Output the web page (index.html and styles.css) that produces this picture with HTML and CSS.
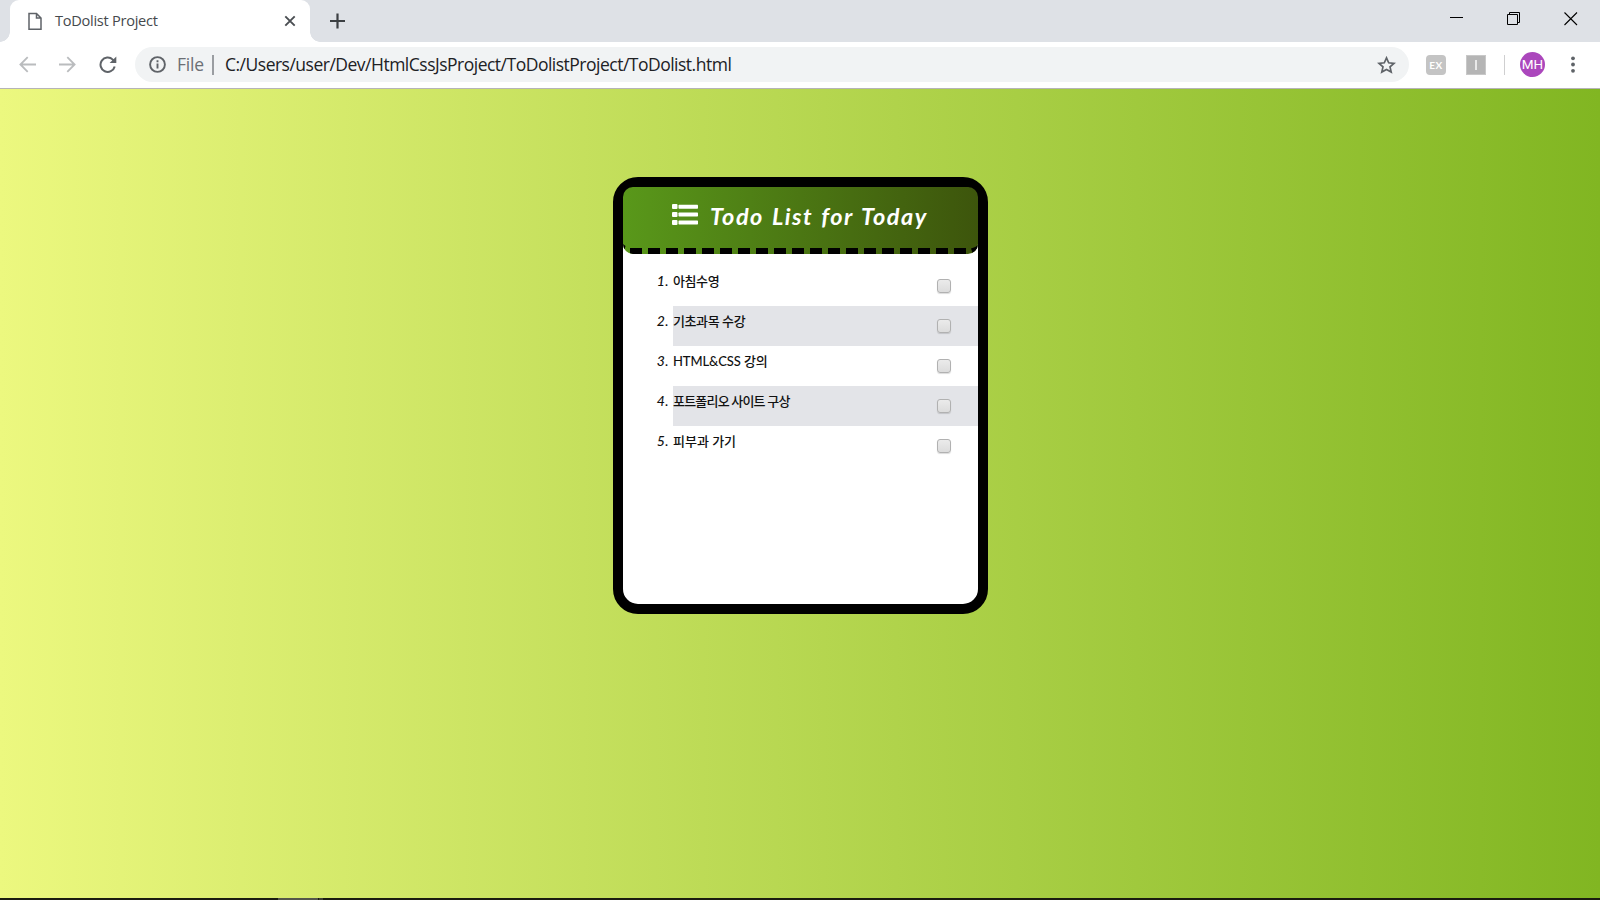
FILE: index.html
```html
<!DOCTYPE html>
<html lang="ko">
<head>
<meta charset="utf-8">
<title>ToDolist Project</title>
<link rel="stylesheet" href="styles.css">
</head>
<body>
<div class="window">
  <header class="tabbar">
    <div class="tab">
      <svg class="tab-icon" width="14" height="19" viewBox="0 0 14 19" fill="none" stroke="#5f6368" stroke-width="1.5"><path d="M1 1.5H8.5L13 6V17.3H1ZM8.5 1.5V6H13"/></svg>
      <span class="tab-title">ToDolist Project</span>
      <svg class="tab-close" width="12" height="12" viewBox="0 0 12 12" stroke="#4a4e52" stroke-width="1.9"><path d="M1.3 1.3 10.7 10.7M10.7 1.3 1.3 10.7"/></svg>
    </div>
    <svg class="new-tab" width="16" height="16" viewBox="0 0 16 16" stroke="#3c4043" stroke-width="2.2"><path d="M7.5 .5V15.5M0 8H15"/></svg>
    <div class="controls">
      <svg width="14" height="14" viewBox="0 0 14 14" stroke="#000" fill="none"><path d="M0 5.5H13"/></svg>
      <svg width="14" height="14" viewBox="0 0 14 14" stroke="#000" fill="none"><path d="M.5 2.5H10.5V12.5H.5ZM2.5 2.5V.5H12.5V10.5H10.5"/></svg>
      <svg width="14" height="14" viewBox="0 0 14 14" stroke="#000" fill="none" stroke-width="1.1"><path d="M.5 .5 13 13M13 .5 .5 13"/></svg>
    </div>
  </header>
  <nav class="toolbar">
    <div class="nav-icons">
      <svg width="17" height="17" viewBox="0 0 17 17" fill="none" stroke="#babcbe" stroke-width="1.8"><path d="M17 8.5H1.5M8.7 1.2 1.4 8.5 8.7 15.8"/></svg>
      <svg width="17" height="17" viewBox="0 0 17 17" fill="none" stroke="#babcbe" stroke-width="1.8"><path d="M0 8.5H15.5M8.3 1.2 15.6 8.5 8.3 15.8"/></svg>
      <svg width="18" height="17" viewBox="0 0 18 17" fill="none" stroke="#5f6368" stroke-width="2"><path d="M15.7 10.5A7.2 7.2 0 1 1 13.8 3.6L15 5"/><path d="M17.3 .6V7.1H10.6Z" fill="#5f6368" stroke="none"/></svg>
    </div>
    <div class="address">
      <svg width="17" height="17" viewBox="0 0 17 17" fill="none" stroke="#5f6368" stroke-width="1.9"><circle cx="8.5" cy="8.5" r="7.4"/><path d="M8.5 7.4V12.5M8.5 4.3V6.2"/></svg>
      <span class="scheme">File</span>
      <span class="divider"></span>
      <span class="url">C:/Users/user/Dev/HtmlCssJsProject/ToDolistProject/ToDolist.html</span>
      <svg class="star" width="19" height="18" viewBox="0 0 19 18" fill="none" stroke="#5f6368" stroke-width="1.7"><path d="M9.5 1.9 11.7 6.8 17 7.3 13 10.9 14.2 16.1 9.5 13.4 4.8 16.1 6 10.9 2 7.3 7.3 6.8Z"/></svg>
    </div>
    <span class="ext ext-round">EX</span>
    <span class="ext ext-square"><i class="bar"></i></span>
    <span class="separator"></span>
    <span class="avatar">MH</span>
    <svg class="menu" width="4" height="17" viewBox="0 0 4 17" fill="#5f6368"><circle cx="2" cy="2.3" r="1.9"/><circle cx="2" cy="8.5" r="1.9"/><circle cx="2" cy="14.8" r="1.9"/></svg>
  </nav>
  <main class="page">
    <section class="card">
      <div class="card-head">
        <svg class="list-icon" width="26" height="21" viewBox="0 0 26 21" fill="#fff"><rect width="5.5" height="5" rx="1"/><rect x="6.5" y=".7" width="19.5" height="4" rx=".7"/><rect y="8" width="5.5" height="5" rx="1"/><rect x="6.5" y="8.5" width="19.5" height="4" rx=".7"/><rect y="16" width="5.5" height="5" rx="1"/><rect x="6.5" y="16.4" width="19.5" height="4" rx=".7"/></svg>
        <h1 class="title">Todo List for Today</h1>
        <svg class="dashes" width="355" height="10" viewBox="0 0 355 10"><path d="M7 7H348" stroke="#000" stroke-width="6" stroke-dasharray="12 6"/><path d="M0 0 2.5 2 1.5 5.5 0 3ZM355 1Q352 4 348 4.5L349.5 9Q354 7 355 2Z"/></svg>
      </div>
      <ol class="list">
        <li class="item"><span class="num">1.</span><div class="row"><span class="label l1">아침수영</span><span class="check"></span></div></li>
        <li class="item"><span class="num">2.</span><div class="row shaded"><span class="label l2">기초과목 수강</span><span class="check"></span></div></li>
        <li class="item"><span class="num">3.</span><div class="row"><span class="label l3">HTML&amp;CSS 강의</span><span class="check"></span></div></li>
        <li class="item"><span class="num">4.</span><div class="row shaded"><span class="label l4">포트폴리오 사이트 구상</span><span class="check"></span></div></li>
        <li class="item"><span class="num">5.</span><div class="row"><span class="label l5">피부과 가기</span><span class="check"></span></div></li>
      </ol>
    </section>
  </main>
  <footer class="taskbar"><span class="task"></span><span class="task-edge"></span></footer>
</div>
</body>
</html>
```
FILE: styles.css
```css
* { box-sizing: border-box; }
body { margin: 0; overflow: hidden; font-family: "Open Sans", "Noto Sans CJK KR", sans-serif; }
svg { display: block; flex: none; }
.window { width: 1600px; height: 900px; display: flex; flex-direction: column; }

.tabbar { height: 42px; flex: none; display: flex; background: #dee1e6; padding-left: 10px; }
.tab {
  width: 300px; height: 42px; display: flex; align-items: center;
  padding: 0 14px 0 18px; background: #fff; border-radius: 9px 9px 0 0; position: relative;
}
.tab::before, .tab::after { content: ""; position: absolute; bottom: 0; width: 10px; height: 10px; }
.tab::before { left: -10px; background: radial-gradient(circle at 0 0, transparent 9.5px, #fff 10px); }
.tab::after { right: -10px; background: radial-gradient(circle at 100% 0, transparent 9.5px, #fff 10px); }
.tab-title { margin: 0 0 2px 13px; font-size: 14.6px; line-height: 20px; color: #45494d; letter-spacing: -.28px; white-space: nowrap; }
.tab-close { margin-left: auto; }
.new-tab { margin: 13px 0 0 20px; }
.controls { display: flex; gap: 43px; margin: 12px 22px 0 auto; }

.toolbar { height: 47px; flex: none; display: flex; align-items: center; background: #fff; border-bottom: 1px solid #b6b4b6; padding: 0 25px 1px 19px; }
.nav-icons { display: flex; gap: 23px; width: 116px; flex: none; }
.address { width: 1274px; flex: none; height: 35px; border-radius: 18px; background: #f1f3f4; display: flex; align-items: center; padding: 0 13px 0 14px; }
.scheme { margin: 0 0 2px 11px; width: 27px; font-size: 17.5px; color: #6b6f74; letter-spacing: -.2px; }
.divider { width: 2px; height: 20px; background: #9a9da1; margin: 0 11px 0 8px; }
.url { margin-bottom: 2px; font-size: 17.5px; line-height: 24px; color: #202124; letter-spacing: -.5px; white-space: nowrap; }
.star { margin-left: auto; }
.ext { width: 20px; height: 20px; margin-left: 17px; background: #c4c4c4; color: #fff; display: flex; align-items: center; justify-content: center; font: 700 10px/20px Lato, sans-serif; letter-spacing: .6px; }
.ext-round { border-radius: 4px; }
.ext-square { margin-left: 20px; background: #b5b5b5; border: 1px solid #c8c8c8; }
.bar { width: 2px; height: 10px; background: #e9e9e9; }
.separator { width: 1px; height: 20px; background: #cfcfd0; margin-left: 18px; }
.avatar { width: 25px; height: 25px; margin: 0 26px 0 15px; border-radius: 50%; background: #ab47bc; color: #fff; font: 13.5px/25px Roboto, sans-serif; text-align: center; }

.page { flex: 1; background: linear-gradient(to right, #ecf87f, #81b622); padding-top: 88px; }
.card { width: 375px; height: 437px; margin-left: 613px; border: 10px solid #000; border-radius: 25px; background: #fff; }
.card-head {
  height: 67px; position: relative; display: flex; padding-left: 49px; overflow: hidden;
  border-radius: 10px; background: linear-gradient(to right, #59981a, #3d550c);
}
.list-icon { margin-top: 17px; }
.title { margin: 13px 0 0 12px; color: #fff; font: italic 700 23.5px/32px Lato, sans-serif; letter-spacing: 1.5px; word-spacing: 1.5px; white-space: nowrap; }
.dashes { position: absolute; left: 0; bottom: 0; }
.list { list-style: none; margin: 12px 0 0; padding: 0; }
.item { height: 40px; display: flex; color: #111; }
.num { width: 50px; padding: 5px 4px 0 0; text-align: right; font: italic 500 14px/20px Lato, sans-serif; letter-spacing: .4px; }
.row { flex: 1; display: flex; justify-content: space-between; padding: 0 27px 0 0; }
.shaded { background: #e3e4e8; }
.label { padding-top: 5px; font: 500 13px/20px Lato, "Noto Sans CJK KR", sans-serif; white-space: nowrap; }
.l1 { letter-spacing: -.4px; }
.l2 { letter-spacing: -.4px; }
.l3 { letter-spacing: -.1px; }
.l4 { letter-spacing: -.8px; }
.check { width: 14px; height: 14px; margin-top: 13px; border: 1px solid #b1b1b1; border-radius: 3px; background: linear-gradient(#ebebeb, #dcdcdc); box-shadow: 0 1px 1px rgba(0,0,0,.14); }

.taskbar { height: 2px; flex: none; background: #1b1c10; display: flex; padding-left: 278px; }
.task { width: 40px; background: #55574a; }
.task-edge { width: 4px; margin-left: 1px; background: #3f4135; }
```
